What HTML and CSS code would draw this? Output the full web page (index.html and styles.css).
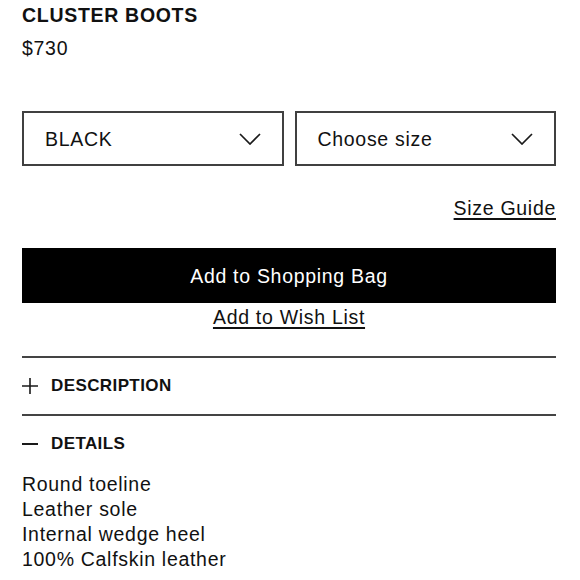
FILE: index.html
```html
<!DOCTYPE html>
<html lang="en">
<head>
<meta charset="utf-8">
<title>Cluster Boots</title>
<link rel="stylesheet" href="styles.css">
</head>
<body>
<main class="product">
  <h1 class="title">CLUSTER BOOTS</h1>
  <p class="price">$730</p>

  <div class="selects">
    <div class="select">
      <span>BLACK</span>
      <svg class="chev" width="22" height="12" viewBox="0 0 22 12"><path d="M1 1 L11 11 L21 1" fill="none" stroke="#1a1a1a" stroke-width="1.7"/></svg>
    </div>
    <div class="select">
      <span>Choose size</span>
      <svg class="chev" width="22" height="12" viewBox="0 0 22 12"><path d="M1 1 L11 11 L21 1" fill="none" stroke="#1a1a1a" stroke-width="1.7"/></svg>
    </div>
  </div>

  <div class="guide-row"><a class="link" href="#">Size Guide</a></div>

  <button class="bag">Add to Shopping Bag</button>
  <div class="wish-row"><a class="link" href="#">Add to Wish List</a></div>

  <section class="acc">
    <div class="acc-head">
      <svg class="acc-icon" width="16" height="16" viewBox="0 0 16 16"><path d="M0 8 H16 M8 0 V16" stroke="#1a1a1a" stroke-width="1.6"/></svg>
      <span>DESCRIPTION</span>
    </div>
  </section>
  <section class="acc">
    <div class="acc-head">
      <svg class="acc-icon" width="16" height="16" viewBox="0 0 16 16"><path d="M0 8 H16" stroke="#1a1a1a" stroke-width="2"/></svg>
      <span>DETAILS</span>
    </div>
    <ul class="details">
      <li>Round toeline</li>
      <li>Leather sole</li>
      <li>Internal wedge heel</li>
      <li>100% Calfskin leather</li>
    </ul>
  </section>
</main>
</body>
</html>
```

FILE: styles.css
```css
* { box-sizing: border-box; }
html, body { margin: 0; padding: 0; background: #fff; }
body {
  font-family: "Liberation Sans", Arial, sans-serif;
  font-size: 19.5px;
  letter-spacing: 0.7px;
  color: #111;
}
.product {
  padding: 3px 24px 0 22px;
}
.title {
  margin: 0;
  font-size: 19.5px;
  font-weight: bold;
  letter-spacing: 0.7px;
  line-height: 24px;
}
.price {
  margin: 9px 0 0;
  line-height: 24px;
}
.selects {
  margin-top: 51px;
  display: grid;
  grid-template-columns: 1fr 1fr;
  gap: 11px;
}
.select {
  height: 55px;
  border: 2px solid #404040;
  display: flex;
  align-items: center;
  justify-content: space-between;
  padding: 1px 21px 0;
  line-height: 24px;
}
.chev { display: block; }
.guide-row {
  margin-top: 30px;
  display: flex;
  justify-content: flex-end;
  line-height: 24px;
}
.link {
  color: #111;
  text-decoration: underline;
  text-underline-offset: 3px;
  text-decoration-thickness: 1.5px;
}
.bag {
  display: block;
  width: 100%;
  height: 55px;
  margin-top: 28px;
  border: 0;
  background: #000;
  color: #fff;
  font: inherit;
  letter-spacing: 0.7px;
  line-height: 24px;
  padding: 0;
  padding-top: 1px;
}
.wish-row {
  margin-top: 2px;
  text-align: center;
  line-height: 24px;
}
.acc {
  border-top: 2px solid #444;
}
.wish-row + .acc { margin-top: 27px; }
.acc-head {
  display: flex;
  align-items: center;
  gap: 13px;
  padding: 16px 0;
  font-size: 17px;
  font-weight: bold;
  letter-spacing: 0.4px;
  line-height: 24px;
}
.acc-icon { display: block; flex: none; }
.details {
  list-style: none;
  margin: 0;
  padding: 0;
  line-height: 25px;
}
```
